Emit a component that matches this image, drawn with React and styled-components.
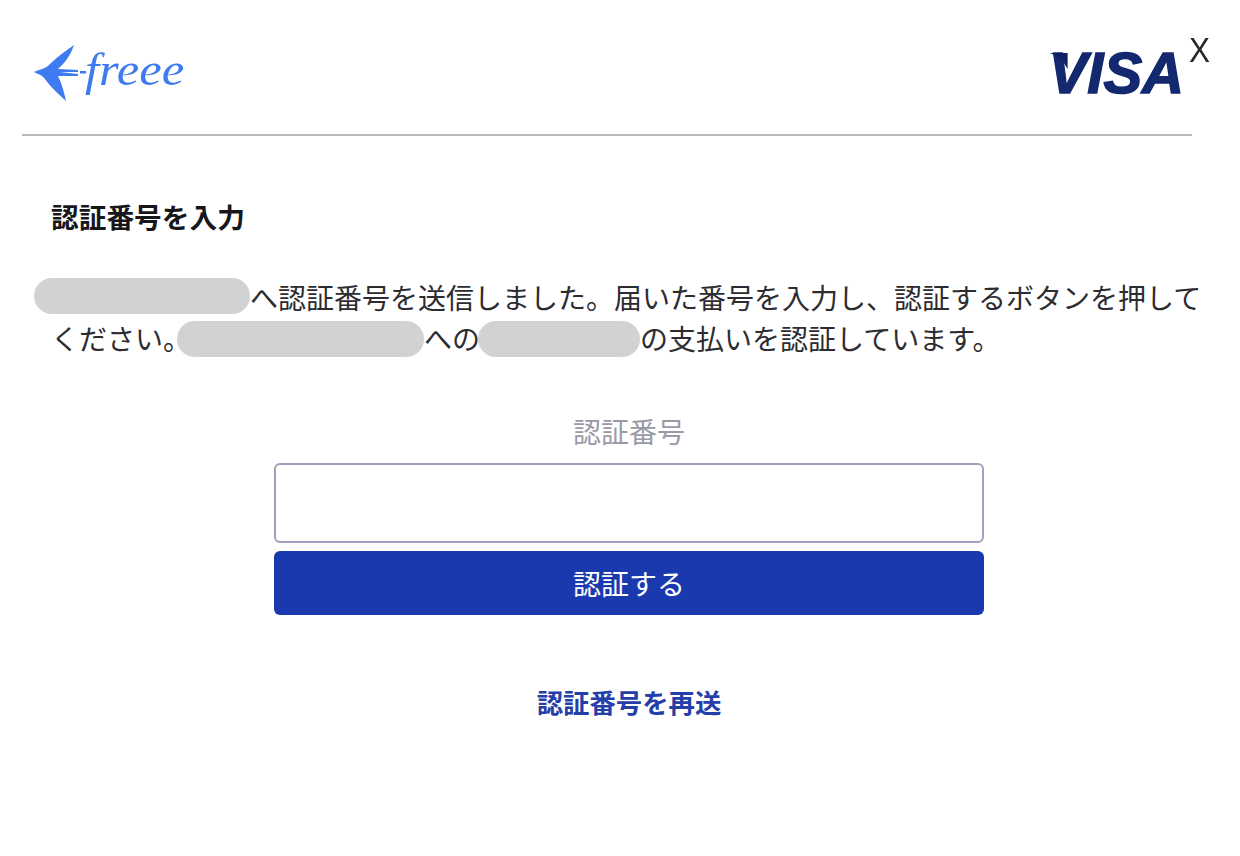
import React from "react";
import styled, { createGlobalStyle } from "styled-components";

const GlobalStyle = createGlobalStyle`
  html, body {
    margin: 0;
    background: #fff;
  }
  body {
    font-family: "Liberation Sans", "Noto Sans CJK JP", sans-serif;
    color: #1f1f24;
  }
`;

const Page = styled.div`
  position: relative;
  width: 1240px;
  height: 856px;
  overflow: hidden;
  background: #fff;
`;

const Header = styled.header`
  display: flex;
  justify-content: space-between;
  align-items: center;
  box-sizing: border-box;
  width: 1170px;
  height: 136px;
  margin-left: 22px;
  padding: 0 8px 0 12px;
  border-bottom: 2px solid #b9b9bb;
`;

const FreeeLogo = styled.div`
  display: flex;
  align-items: center;
  margin-top: 12px;
  color: #3f7bf0;
  filter: blur(0.5px);
`;

const FreeeWord = styled.span`
  margin-left: -1px;
  width: 98px;
  font-family: "Liberation Serif", serif;
  font-style: italic;
  font-size: 46px;
  line-height: 1;
  margin-top: -6px;
  transform: scaleX(1.1);
  transform-origin: left center;
`;

const VisaWord = styled.span`
  position: relative;
  margin-top: 12px;
  font-family: "Liberation Sans", sans-serif;
  font-style: italic;
  font-weight: 700;
  font-size: 58px;
  line-height: 1;
  color: #13286f;
  -webkit-text-stroke: 1.5px #13286f;
  filter: blur(0.5px);

  &::before {
    content: "";
    position: absolute;
    top: 9px;
    left: 1px;
    width: 18px;
    height: 16px;
    background: #0f1f63;
    clip-path: polygon(0 0, 100% 0, 100% 100%, 70% 45%, 35% 15%);
  }
`;

const CloseMark = styled.span`
  position: absolute;
  top: 30px;
  left: 1189px;
  font-family: "Liberation Sans", sans-serif;
  font-size: 35px;
  line-height: 40px;
  color: #26262b;
  transform: scaleX(0.9);
  transform-origin: left center;
`;

const Content = styled.main`
  padding: 63px 38px 0 51px;
`;

const Title = styled.h1`
  margin: 0 0 40px;
  font-size: 27.7px;
  line-height: 40px;
  font-weight: 700;
  color: #17171b;
`;

const Message = styled.p`
  margin: 0;
  font-size: 28px;
  line-height: 41px;
  font-weight: 400;
  color: #2c2c31;
`;

/* negative block margins keep the mask from stretching the line box */
const Masked = styled.span`
  display: inline-block;
  width: ${(p) => p.$width}px;
  height: 36px;
  margin: -10px 0 -10px ${(p) => p.$offset || 0}px;
  border-radius: 18px;
  background: #d1d2d4;
  vertical-align: ${(p) => p.$lift}px;
`;

const Form = styled.form`
  display: flex;
  flex-direction: column;
  align-items: center;
  width: 710px;
  margin: 53px 0 0 223px;
`;

const FieldLabel = styled.label`
  margin-bottom: 9px;
  font-size: 28px;
  line-height: 40px;
  color: #9a9aa6;
`;

const CodeInput = styled.input`
  box-sizing: border-box;
  width: 100%;
  height: 80px;
  border: 2px solid #a09fbd;
  border-radius: 6px;
  background: #fff;
`;

const SubmitButton = styled.button`
  width: 100%;
  height: 64px;
  margin-top: 8px;
  border: 0;
  border-radius: 6px;
  background: #1a39ae;
  color: #fff;
  font-family: inherit;
  font-size: 28px;
`;

const ResendLink = styled.a`
  margin-top: 69px;
  font-size: 26.4px;
  line-height: 40px;
  font-weight: 700;
  color: #2440a8;
  text-decoration: none;
`;

const PlaneIcon = () => (
  <svg width="52" height="58" viewBox="0 0 52 58" fill="#3f7bf0">
    <path d="M0 28 C4 26 12 25 17 19 C24 12 33 6 40 1 C37 10 32 18 24 25 L44 26 L44 28 L26 28 L44 30 L44 32 L24 32 C28 40 30 48 32 57 C24 50 16 42 11 35 C8 31 4 30 0 28 Z" />
    <rect x="46" y="27" width="6" height="2.5" />
  </svg>
);

export default function App() {
  return (
    <Page>
      <GlobalStyle />
      <Header>
        <FreeeLogo>
          <PlaneIcon />
          <FreeeWord>freee</FreeeWord>
        </FreeeLogo>
        <VisaWord>VISA</VisaWord>
      </Header>
      <CloseMark>X</CloseMark>
      <Content>
        <Title>認証番号を入力</Title>
        <Message>
          <Masked $width={216} $offset={-17} $lift={5} />
          へ認証番号を送信しました。届いた番号を入力し、認証するボタンを押してください。
          <Masked $width={247} $offset={-14} $lift={3} />
          への
          <Masked $width={162} $offset={-2} $lift={3} />
          の支払いを認証しています。
        </Message>
        <Form>
          <FieldLabel>認証番号</FieldLabel>
          <CodeInput />
          <SubmitButton type="button">認証する</SubmitButton>
          <ResendLink href="#">認証番号を再送</ResendLink>
        </Form>
      </Content>
    </Page>
  );
}
